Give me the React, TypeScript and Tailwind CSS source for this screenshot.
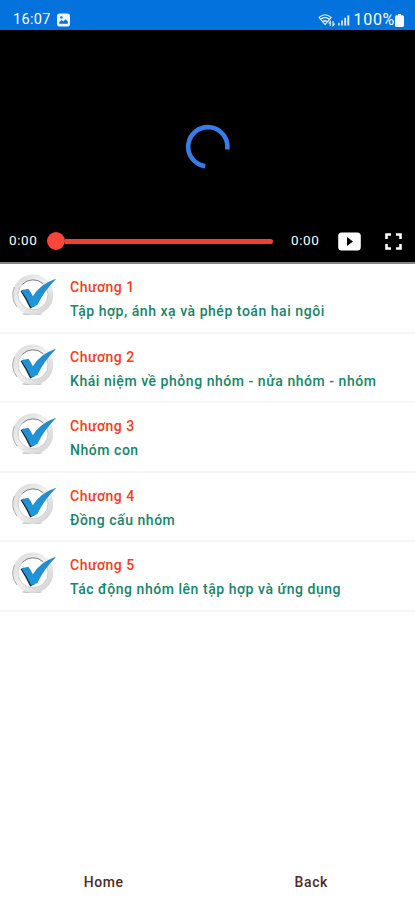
import React from 'react';

interface Chapter {
  id: number;
  title: string;
  description: string;
}

const chapters: Chapter[] = [
  { id: 1, title: 'Chương 1', description: 'Tập hợp, ánh xạ và phép toán hai ngôi' },
  { id: 2, title: 'Chương 2', description: 'Khái niệm về phỏng nhóm - nửa nhóm - nhóm' },
  { id: 3, title: 'Chương 3', description: 'Nhóm con' },
  { id: 4, title: 'Chương 4', description: 'Đồng cấu nhóm' },
  { id: 5, title: 'Chương 5', description: 'Tác động nhóm lên tập hợp và ứng dụng' },
];

const CheckBadge: React.FC = () => (
  <svg className="h-11 w-11 shrink-0" viewBox="0 0 44 44" fill="none">
    <defs>
      <linearGradient id="ring" x1="0" y1="0" x2="1" y2="1">
        <stop offset="0" stopColor="#dadada" />
        <stop offset="0.45" stopColor="#f0f0f0" />
        <stop offset="1" stopColor="#d2d2d2" />
      </linearGradient>
      <linearGradient id="tick" x1="0" y1="0" x2="0" y2="1">
        <stop offset="0" stopColor="#2487c4" />
        <stop offset="1" stopColor="#1c9ae0" />
      </linearGradient>
    </defs>
    <ellipse cx="20" cy="40" rx="10" ry="1" fill="#bcbcbc" />
    <circle cx="21" cy="20.8" r="17.6" stroke="url(#ring)" strokeWidth="5.2" />
    <path d="M5 33A20.2 20.2 0 0 1 2.4 13" stroke="#9a9a9a" strokeWidth="0.8" />
    <circle cx="21" cy="20.8" r="15" stroke="#bcbcbc" strokeWidth="0.7" />
    <path d="M10.5 10.2A15 15 0 0 1 31 9.6" stroke="#808080" strokeWidth="0.9" />
    <path d="M8.6 17.2L12 15.4L20 26L23 32L18.2 34.4Q13.5 24.5 8.6 17.2Z" fill="#18242c" />
    <path d="M9.2 16.6L16.2 14.8Q19 18 20.8 22.2Q28.6 9.8 44.4 4.6Q32 17 25.4 31L19.2 33.6Q15 24 9.2 16.6Z" fill="url(#tick)" />
  </svg>
);

const StatusBar: React.FC = () => (
  <div className="flex h-[30px] items-center justify-between bg-[#0372dc] pt-[10px] pr-[11px] pl-[13px] text-white">
    <div className="flex items-center gap-[6px]">
      <span className="text-[14.5px] leading-none tracking-[0.3px]">16:07</span>
      <svg className="h-3.5 w-[13px]" viewBox="0 0 13 14">
        <rect x="0" y="0.5" width="13" height="13" rx="2.8" fill="#f0f6ff" />
        <path d="M2.3 10.7V9L4.7 7L6.5 8.5L8.6 6.3L10.8 8.5V10.7Z" fill="#0372dc" />
        <circle cx="4.4" cy="4.4" r="1.2" fill="#0372dc" />
      </svg>
    </div>
    <div className="flex items-center">
      {/* Wi-Fi */}
      <svg className="h-3.5 w-[18px]" viewBox="0 0 18 14" fill="none" stroke="#e4efff" strokeWidth="1.5">
        <path d="M1 4.4Q7 -1 13.2 4.4L7.1 11.7Z" strokeWidth="1.1" strokeLinejoin="round" />
        <path d="M3 6.2Q7.1 3 11.2 6.2M5 8.6Q7.1 7 9.2 8.6" />
        <path d="M12.3 13V8.5L10.7 10.3M15 8V12.5L16.6 10.7" strokeWidth="1.2" />
      </svg>
      {/* Mobile signal */}
      <svg className="ml-[2px] h-3 w-3" viewBox="0 0 13 12" fill="#e4efff">
        <rect x="0" y="9" width="2" height="3" opacity="0.8" />
        <rect x="3.4" y="6.5" width="2" height="5.5" opacity="0.9" />
        <rect x="6.8" y="3.5" width="2" height="8.5" />
        <rect x="10.2" y="1" width="2" height="11" />
      </svg>
      <span className="ml-1 text-[16px] leading-none tracking-[0.7px]">100%</span>
      <svg className="h-[13px] w-[9px]" viewBox="0 0 9 13" fill="#f4f9ff">
        <path d="M3 0H6V1.2H7.5Q9 1.2 9 2.8V11.4Q9 13 7.5 13H1.5Q0 13 0 11.4V2.8Q0 1.2 1.5 1.2H3Z" />
      </svg>
    </div>
  </div>
);

const VideoPlayer: React.FC = () => (
  <div className="flex h-[234px] flex-col border-b-2 border-[#858585] bg-black">
    {/* Loading spinner */}
    <div className="flex h-[189px] justify-center pt-[94px]">
      <svg className="h-[46px] w-[46px]" viewBox="0 0 46 46" fill="none">
        <path d="M42.2 25.5A19.6 19.6 0 1 0 20.3 42.2" stroke="#397be9" strokeWidth="4.6" />
      </svg>
    </div>

    {/* Controls */}
    <div className="flex h-[43px] items-center pt-px pr-[13px] pl-[9px] text-[13.5px] leading-none text-white">
      <span className="w-[38px] tracking-[0.6px]">0:00</span>
      <div className="flex w-[226px] items-center">
        <div className="h-[18px] w-[18px] rounded-full bg-[#f9463a]"></div>
        <div className="h-[5px] flex-1 rounded-r-full bg-[#ed4135]"></div>
      </div>
      <span className="ml-[18px] w-[47px] tracking-[0.6px]">0:00</span>
      <svg className="h-[19px] w-[23px]" viewBox="0 0 23 19">
        <rect x="0.2" y="0.5" width="22.6" height="18" rx="3.5" fill="white" />
        <path d="M9 5V14L15 9.5Z" fill="black" />
      </svg>
      <svg className="ml-[24px] h-[17px] w-[17px]" viewBox="0 0 17 17" fill="none" stroke="white" strokeWidth="2.6">
        <path d="M1.5 6V1.5H6M11 1.5H15.5V6M15.5 11V15.5H11M6 15.5H1.5V11" />
      </svg>
    </div>
  </div>
);

const ChapterRow: React.FC<{ chapter: Chapter }> = ({ chapter }) => (
  <li className="flex h-[69.6px] border-b-2 border-[#f5f5f5] pt-[10px] pl-3">
    <CheckBadge />
    <div className="ml-[14px] text-sm font-medium whitespace-nowrap">
      <h3 className="mt-[3px] leading-5 tracking-[0.5px] text-[#fa3b17]">{chapter.title}</h3>
      <p className="mt-[4px] leading-5 tracking-[0.54px] text-[#14866a]">{chapter.description}</p>
    </div>
  </li>
);

const App: React.FC = () => {
  return (
    <div className="flex h-[900px] w-[415px] flex-col overflow-hidden bg-white font-['Roboto','Noto_Sans',sans-serif]">
      <StatusBar />
      <VideoPlayer />

      <ul className="flex-1">
        {chapters.map((chapter) => (
          <ChapterRow key={chapter.id} chapter={chapter} />
        ))}
      </ul>

      <nav className="grid h-9 grid-cols-2 text-center text-sm leading-none font-medium tracking-[0.6px] text-[#4f2b27]">
        <button>Home</button>
        <button>Back</button>
      </nav>
    </div>
  );
};

export default App;
